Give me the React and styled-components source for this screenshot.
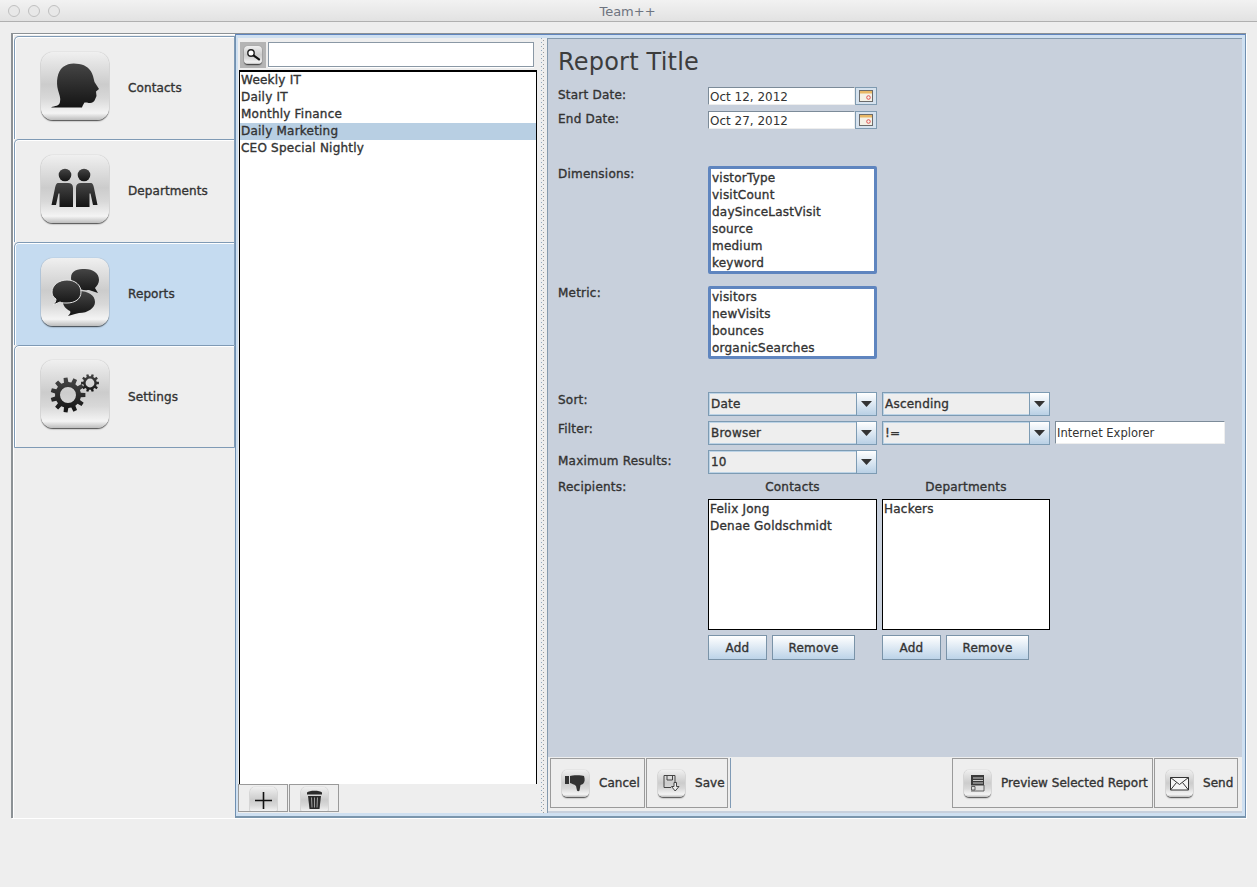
import React from "react";
import styled, { createGlobalStyle, css } from "styled-components";

const GlobalStyle = createGlobalStyle`
  html, body {
    margin: 0;
    padding: 0;
    background: #eeeeee;
  }
  body {
    font-family: "DejaVu Sans", "Liberation Sans", sans-serif;
    font-size: 12px;
    color: #333;
  }
`;

// the screenshot's font sits between regular and bold
const strong = css`
  -webkit-text-stroke: 0.35px #333;
  letter-spacing: ${(p) => p.$spacing ?? 0.22}px;
`;

// builds a cog outline with a round hole, used by the settings icon
const gearPath = (cx, cy, outer, root, hole, teeth) => {
  const step = (Math.PI * 2) / teeth;
  const pt = (r, a) => `${(cx + r * Math.cos(a)).toFixed(2)} ${(cy + r * Math.sin(a)).toFixed(2)}`;
  let d = "";
  for (let i = 0; i < teeth; i++) {
    const a = i * step;
    d += `${i === 0 ? "M" : "L"}${pt(root, a - step * 0.3)} L${pt(outer, a - step * 0.2)} L${pt(outer, a + step * 0.2)} L${pt(root, a + step * 0.3)} `;
  }
  d += `Z M${cx - hole} ${cy} a${hole} ${hole} 0 1 0 ${hole * 2} 0 a${hole} ${hole} 0 1 0 ${-hole * 2} 0 Z`;
  return d;
};

const Shared = () => (
  <svg width="0" height="0" style={{ position: "absolute" }}>
    <defs>
      <linearGradient id="glyph" x1="0" y1="0" x2="0" y2="1">
        <stop offset="0" stopColor="#454545" />
        <stop offset="1" stopColor="#141414" />
      </linearGradient>
    </defs>
  </svg>
);

const HeadIcon = () => (
  <svg viewBox="0 0 68 68">
    <path
      fill="url(#glyph)"
      d="M10 55.5C14 53.5 18 54.5 19 50C20 46 18 42 17 38C15 30 16 20 22 15C27 11 33 11 38 12C45 13 50 17 52 24L53.5 30L58 37L55 39.5L55.5 44L54 47.5C53 50.5 50 52 46 50.5L43.5 50.5C42.5 52 41.5 54 41 55.5Z"
    />
  </svg>
);

const PeopleIcon = () => (
  <svg viewBox="0 0 68 68">
    <g fill="url(#glyph)">
      <circle cx="24" cy="20" r="6.3" />
      <circle cx="43" cy="20" r="6.3" />
      <path d="M17 28H27Q32 28 32 33V52H18.5V38.5H17.5L15 50H10.5L14 33Q15 28 17 28Z" />
      <path d="M50 28H40Q35 28 35 33V52H48.5V38.5H49.5L52 50H56.5L53 33Q52 28 50 28Z" />
    </g>
  </svg>
);

const BubblesIcon = () => (
  <svg viewBox="0 0 68 68">
    <g fill="url(#glyph)">
      <path d="M30 20C30 12 37 11 44 11C52 11 58 15 58 22C58 25 56 28 54 30L57 35L48 32C38 33 30 28 30 20Z" />
      <path d="M22 44C22 37 30 33 38 33C47 33 54 37 54 44C54 50 47 55 38 55L34 56L27 58C29 56 30 54 29 53C25 51 22 48 22 44Z" />
      <path
        stroke="#e6e6e6"
        strokeWidth="1"
        d="M11 34C11 27 18 22 26 22C34 22 40 27 40 34C40 41 34 45 26 45C23 45 21 45 19 44L12 47C14 45 15 43 15 41C12 39 11 37 11 34Z"
      />
    </g>
  </svg>
);

const CogsIcon = () => (
  <svg viewBox="0 0 68 68">
    <g fill="url(#glyph)" fillRule="evenodd">
      <path d={gearPath(27, 35, 17.5, 13, 8, 11)} />
      <path d={gearPath(49, 23, 9, 6.8, 4.4, 10)} />
    </g>
  </svg>
);

const SearchIcon = () => (
  <svg viewBox="0 0 18 18">
    <circle cx="7" cy="7" r="3.2" fill="#fff" stroke="#222" strokeWidth="1.4" />
    <path d="M9.8 9.6L15 13.4" stroke="#111" strokeWidth="2.2" strokeLinecap="round" />
  </svg>
);

const PlusIcon = () => (
  <svg viewBox="0 0 27 27">
    <path d="M13.5 5V22M5 13.5H22" stroke="#111" strokeWidth="1.6" />
  </svg>
);

const TrashIcon = () => (
  <svg viewBox="0 0 27 27">
    <path fill="#2b2b2b" d="M6 5.5C8 3 19 3 21 5.5V7.5H6Z" />
    <path fill="#2b2b2b" d="M7 9H20L18.5 22H8.5Z" />
    <path d="M10.5 10.5L11 20.5M13.5 10.5V20.5M16.5 10.5L16 20.5" stroke="#aaa" strokeWidth="0.9" />
  </svg>
);

const ThumbIcon = () => (
  <svg viewBox="0 0 27 27">
    <path
      fill="#333"
      d="M3 6H7V14H3ZM8 6C10 5 20 5 22 6C23 9 23 12 21 14L18.5 15L17.5 20.5C17 21.5 15.5 21.5 15 20.5L14 16C12 14 10 14 8 13Z"
    />
  </svg>
);

const SaveIcon = () => (
  <svg viewBox="0 0 27 27">
    <path fill="none" stroke="#444" d="M6 5.5H17V12M13 17.5H6V5.5M9 5.5V10H14.5V5.5" />
    <path fill="#eee" stroke="#444" d="M16 12.5H18.5V16.5H21L17.2 21L13.5 16.5H16Z" />
  </svg>
);

const PreviewIcon = () => (
  <svg viewBox="0 0 27 27">
    <path fill="#3a3a3a" d="M7 5H20V21H7Z" />
    <path d="M9 8H19M9 10.5H19M9 13H19" stroke="#ddd" strokeWidth="0.9" />
    <path fill="#ddd" d="M7 15.5H20V21H7Z" />
    <path fill="none" stroke="#444" strokeWidth="0.8" d="M7.5 16.5H11V20H7.5ZM7 21H20V15" />
  </svg>
);

const MailIcon = () => (
  <svg viewBox="0 0 27 27">
    <path fill="#f5f5f5" stroke="#333" d="M4.5 7.5H22.5V20H4.5Z" />
    <path fill="none" stroke="#333" d="M4.5 7.5L13.5 14.5L22.5 7.5M4.5 20L10.5 12.5M22.5 20L16.5 12.5" />
  </svg>
);

const CalendarIcon = () => (
  <svg viewBox="0 0 16 14" width="16" height="14">
    <rect x="1.5" y="1.5" width="13" height="11" fill="#f4f1e6" stroke="#6b6b6b" />
    <rect x="2" y="2" width="12" height="2.5" fill="#e8b765" />
    <circle cx="10.5" cy="8.5" r="1.8" fill="none" stroke="#e05050" />
  </svg>
);

const ArrowIcon = () => (
  <svg viewBox="0 0 11 6" width="11" height="6">
    <path d="M0 0H11L5.5 6Z" fill="#333" />
  </svg>
);

const tabs = [
  { name: "Contacts", icon: <HeadIcon /> },
  { name: "Departments", icon: <PeopleIcon /> },
  { name: "Reports", icon: <BubblesIcon />, active: true },
  { name: "Settings", icon: <CogsIcon /> },
];

const reports = ["Weekly IT", "Daily IT", "Monthly Finance", "Daily Marketing", "CEO Special Nightly"];
const dimensions = ["vistorType", "visitCount", "daySinceLastVisit", "source", "medium", "keyword"];
const metrics = ["visitors", "newVisits", "bounces", "organicSearches"];

function Combo({ value, width }) {
  return (
    <ComboBox $width={width}>
      <ComboValue>{value}</ComboValue>
      <ComboArrow>
        <ArrowIcon />
      </ComboArrow>
    </ComboBox>
  );
}

function DateField({ value }) {
  return (
    <DateWrap>
      <DateInput>{value}</DateInput>
      <DateButton>
        <CalendarIcon />
      </DateButton>
    </DateWrap>
  );
}

function Recipient({ title, people }) {
  return (
    <RecipientColumn>
      <RecipientTitle>{title}</RecipientTitle>
      <RecipientList>
        {people.map((p) => (
          <RecipientItem key={p}>{p}</RecipientItem>
        ))}
      </RecipientList>
      <ButtonRow>
        <SmallButton $width={59}>Add</SmallButton>
        <SmallButton $width={83}>Remove</SmallButton>
      </ButtonRow>
    </RecipientColumn>
  );
}

function FooterAction({ icon, label, width }) {
  return (
    <FooterButton $width={width} $spacing={0.03}>
      <Tile $size={27} $radius={5}>
        {icon}
      </Tile>
      <span>{label}</span>
    </FooterButton>
  );
}

export default function App() {
  return (
    <Page>
      <GlobalStyle />
      <Shared />
      <TitleBar>
        <Lights>
          <Light />
          <Light />
          <Light />
        </Lights>
        Team++
      </TitleBar>
      <Frame>
        <Sidebar>
          {tabs.map((t) => (
            <Tab key={t.name} $active={t.active}>
              <TabTile $size={68} $radius={12}>
                {t.icon}
              </TabTile>
              <TabLabel $spacing={0.1}>{t.name}</TabLabel>
            </Tab>
          ))}
        </Sidebar>
        <Main>
          <ListPane>
            <SearchBar>
              <SearchButton>
                <Tile $size={18} $radius={4}>
                  <SearchIcon />
                </Tile>
              </SearchButton>
              <SearchInput />
            </SearchBar>
            <ReportList>
              {reports.map((r) => (
                <ReportItem key={r} $selected={r === "Daily Marketing"}>
                  {r}
                </ReportItem>
              ))}
            </ReportList>
            <ListToolbar>
              <ToolButton>
                <Tile $size={27} $radius={5}>
                  <PlusIcon />
                </Tile>
              </ToolButton>
              <ToolButton>
                <Tile $size={27} $radius={5}>
                  <TrashIcon />
                </Tile>
              </ToolButton>
            </ListToolbar>
          </ListPane>
          <Splitter />
          <Panel>
            <FormArea>
              <Title>Report Title</Title>
              <Row $top={8}>
                <Label>Start Date:</Label>
                <DateField value="Oct 12, 2012" />
              </Row>
              <Row $top={6}>
                <Label>End Date:</Label>
                <DateField value="Oct 27, 2012" />
              </Row>
              <Row $top={37}>
                <Label>Dimensions:</Label>
                <PickList $height={108} $pad={1}>
                  {dimensions.map((d) => (
                    <PickItem key={d}>{d}</PickItem>
                  ))}
                </PickList>
              </Row>
              <Row $top={12}>
                <Label $offset={0}>Metric:</Label>
                <PickList $height={73} $pad={0}>
                  {metrics.map((m) => (
                    <PickItem key={m}>{m}</PickItem>
                  ))}
                </PickList>
              </Row>
              <Row $top={33}>
                <Label>Sort:</Label>
                <Fields>
                  <Combo value="Date" width={169} />
                  <Combo value="Ascending" width={168} />
                </Fields>
              </Row>
              <Row $top={5}>
                <Label>Filter:</Label>
                <Fields>
                  <Combo value="Browser" width={169} />
                  <Combo value="!=" width={168} />
                  <FilterInput>Internet Explorer</FilterInput>
                </Fields>
              </Row>
              <Row $top={5}>
                <Label $offset={4}>Maximum Results:</Label>
                <Fields>
                  <Combo value="10" width={169} />
                </Fields>
              </Row>
              <Row $top={5}>
                <Label>Recipients:</Label>
                <Fields>
                  <Recipient title="Contacts" people={["Felix Jong", "Denae Goldschmidt"]} />
                  <Recipient title="Departments" people={["Hackers"]} />
                </Fields>
              </Row>
            </FormArea>
            <Footer>
              <FooterAction icon={<ThumbIcon />} label="Cancel" width={95} />
              <FooterAction icon={<SaveIcon />} label="Save" width={82} />
              <FooterGap />
              <FooterAction icon={<PreviewIcon />} label="Preview Selected Report" width={201} />
              <FooterAction icon={<MailIcon />} label="Send" width={84} />
            </Footer>
          </Panel>
        </Main>
      </Frame>
    </Page>
  );
}

const Page = styled.div`
  width: 1257px;
  height: 887px;
  overflow: hidden;
  background: #eeeeee;
`;

const TitleBar = styled.div`
  height: 22px;
  box-sizing: border-box;
  padding: 1px 2px 0 0;
  display: flex;
  align-items: center;
  justify-content: center;
  position: relative;
  font-size: 13px;
  color: #6e7480;
  background: linear-gradient(180deg, #f2f2f2, #e2e2e2);
  border-bottom: 1px solid #b0b0b0;
`;

const Lights = styled.div`
  position: absolute;
  left: 8px;
  top: 5px;
  display: flex;
  gap: 8px;
`;

const Light = styled.span`
  width: 10px;
  height: 10px;
  border-radius: 50%;
  border: 1px solid #c0c0c0;
  background: #e8e8e8;
`;

const Frame = styled.div`
  display: flex;
  height: 785px;
  width: 1235px;
  margin: 11px 0 0 11px;
  box-sizing: border-box;
  border-top: 1px solid #8c9195;
  border-left: 2px solid #8c9195;
  box-shadow: 1px 1px 0 #fff;
`;

const Sidebar = styled.div`
  width: 222px;
  flex: none;
  box-sizing: border-box;
  padding-top: 1px;
  border-top: 1px solid #fff;
  border-left: 1px solid #fff;
`;

const Tab = styled.div`
  height: 103px;
  box-sizing: border-box;
  display: flex;
  align-items: center;
  gap: 19px;
  padding: 0 0 3px 26px;
  border: 1px solid #7f9ab5;
  border-width: 1px 1px 0 1px;
  border-top-left-radius: 5px;
  box-shadow: inset 0 1px 0 #fff, inset 1px 0 0 #fff;
  background: ${(p) => (p.$active ? "#c5dbf0" : "#eeeeee")};
  &:last-child {
    border-bottom-width: 1px;
  }
`;

const TabLabel = styled.span`
  ${strong}
  margin-top: 3px;
`;

const Tile = styled.span`
  flex: none;
  display: block;
  width: ${(p) => p.$size}px;
  height: ${(p) => p.$size}px;
  border-radius: ${(p) => p.$radius}px;
  background: linear-gradient(180deg, #f0f0f0 0%, #e2e2e2 18%, #cccccc 48%, #d8d8d8 68%, #f4f4f4 90%, #bdbdbd 100%);
  box-shadow: 0 1px 1px rgba(0, 0, 0, 0.5), 0 2px 2px -1px rgba(0, 0, 0, 0.3), 0 0 1px rgba(0, 0, 0, 0.35);
  svg {
    display: block;
    width: 100%;
    height: 100%;
  }
`;

const TabTile = styled(Tile)`
  margin-top: -2px;
`;

const Main = styled.div`
  flex: 1;
  min-width: 0;
  display: flex;
  box-sizing: border-box;
  padding: 3px 3px 3px 2px;
  background: #cfe0f1;
  border: 1px solid #6f8fb0;
  border-top: 1px solid #5f85bf;
  border-bottom: 2px solid #7b96ad;
`;

const ListPane = styled.div`
  width: 299px;
  flex: none;
  display: flex;
  flex-direction: column;
  background: #eeeeee;
`;

const SearchBar = styled.div`
  height: 32px;
  flex: none;
  box-sizing: border-box;
  padding: 4px 3px 2px 2px;
  display: flex;
  gap: 2px;
`;

const SearchButton = styled.div`
  width: 26px;
  height: 26px;
  display: flex;
  align-items: center;
  justify-content: center;
  background: #b4b4b4;
`;

const SearchInput = styled.div`
  flex: 1;
  height: 23px;
  background: #fff;
  border: 1px solid #8a98a5;
  box-shadow: 0 1px 0 #fff;
`;

const ReportList = styled.div`
  flex: 1;
  min-height: 0;
  margin-left: 1px;
  background: #fff;
  border: 1px solid #000;
  border-top-width: 2px;
  border-bottom: none;
`;

const ReportItem = styled.div`
  height: 17px;
  line-height: 17px;
  padding-left: 1px;
  ${strong}
  background: ${(p) => (p.$selected ? "#b8cfe3" : "transparent")};
`;

const ListToolbar = styled.div`
  height: 29px;
  flex: none;
  display: flex;
  gap: 1px;
`;

const ToolButton = styled.div`
  width: 50px;
  height: 28px;
  box-sizing: border-box;
  display: flex;
  justify-content: center;
  padding-top: 2px;
  overflow: hidden;
  border: 1px solid #9a9a9a;
`;

const Splitter = styled.div`
  width: 10px;
  flex: none;
  background-color: #eeeeee;
  background-image: repeating-linear-gradient(180deg, #8ea6bd 0 1px, transparent 1px 4px),
    repeating-linear-gradient(180deg, transparent 0 2px, #9b9b9b 2px 3px, transparent 3px 4px);
  background-size: 1px 100%;
  background-position: 4px 0, 6px 0;
  background-repeat: no-repeat;
`;

const Panel = styled.div`
  flex: 1;
  min-width: 0;
  display: flex;
  flex-direction: column;
  background: #c8d0dc;
  border-left: 1px solid #8499ad;
  border-top: 1px solid #8499ad;
`;

const FormArea = styled.div`
  flex: 1;
  min-height: 0;
  box-sizing: border-box;
  padding: 6px 0 0 10px;
`;

const Title = styled.div`
  height: 34px;
  line-height: 34px;
  font-size: 24px;
  letter-spacing: 0.2px;
  color: #3c3c3c;
`;

const Row = styled.div`
  display: grid;
  grid-template-columns: 150px 1fr;
  margin-top: ${(p) => p.$top}px;
`;

const Label = styled.div`
  line-height: 14px;
  padding-top: ${(p) => p.$offset ?? 1}px;
  ${strong}
`;

const Fields = styled.div`
  display: flex;
  gap: 5px;
`;

const DateWrap = styled.div`
  display: flex;
  height: 18px;
`;

const DateInput = styled.div`
  width: 147px;
  box-sizing: border-box;
  line-height: 18px;
  padding-left: 1px;
  background: #fff;
  border: 1px solid #7c8b99;
  border-right-color: #eee;
  border-bottom-color: #eee;
`;

const DateButton = styled.div`
  width: 22px;
  box-sizing: border-box;
  display: flex;
  align-items: center;
  justify-content: center;
  background: #d6e2ee;
  border: 1px solid #7f9ab0;
`;

const PickList = styled.div`
  width: 169px;
  height: ${(p) => p.$height}px;
  box-sizing: border-box;
  padding-top: ${(p) => p.$pad}px;
  background: #fff;
  border: 3px solid #5f85bf;
  border-radius: 2px;
`;

const PickItem = styled.div`
  height: 17px;
  line-height: 17px;
  padding-left: 1px;
  ${strong}
`;

const ComboBox = styled.div`
  width: ${(p) => p.$width}px;
  height: 24px;
  box-sizing: border-box;
  display: flex;
  background: #eeeeee;
  border: 1px solid #7d9bb3;
  box-shadow: inset 0 0 0 1px #bcd3e6;
`;

const ComboValue = styled.div`
  flex: 1;
  line-height: 22px;
  padding-left: 2px;
  ${strong}
`;

const ComboArrow = styled.div`
  width: 19px;
  flex: none;
  display: flex;
  align-items: center;
  justify-content: center;
  border-left: 1px solid #7d9bb3;
  background: linear-gradient(180deg, #ffffff, #b9d0e5);
`;

const FilterInput = styled.div`
  width: 170px;
  height: 23px;
  box-sizing: border-box;
  font-size: 11.5px;
  line-height: 23px;
  padding-left: 1px;
  background: #fff;
  border: 1px solid #7c8b99;
  border-right-color: #eee;
  border-bottom-color: #eee;
`;

const RecipientColumn = styled.div`
  width: 169px;
  &:nth-child(2) {
    width: 168px;
  }
`;

const RecipientTitle = styled.div`
  height: 20px;
  box-sizing: border-box;
  padding-top: 1px;
  line-height: 14px;
  text-align: center;
  ${strong}
`;

const RecipientList = styled.div`
  height: 131px;
  box-sizing: border-box;
  padding-top: 1px;
  background: #fff;
  border: 1px solid #000;
`;

const RecipientItem = styled.div`
  height: 17px;
  line-height: 17px;
  padding-left: 1px;
  ${strong}
`;

const ButtonRow = styled.div`
  display: flex;
  gap: 5px;
  margin-top: 5px;
`;

const SmallButton = styled.div`
  width: ${(p) => p.$width}px;
  height: 25px;
  box-sizing: border-box;
  line-height: 24px;
  text-align: center;
  ${strong}
  background: linear-gradient(180deg, #ffffff, #bcd3e8);
  border: 1px solid #7a93a8;
`;

const Footer = styled.div`
  height: 56px;
  flex: none;
  box-sizing: border-box;
  padding: 1px 4px 3px 2px;
  display: flex;
  gap: 1px;
  background: #eeeeee;
  border-bottom: 2px solid #c8d0dc;
`;

const FooterGap = styled.div`
  flex: 1;
  margin-left: 1px;
  border-left: 1px solid #7f9ab5;
`;

const FooterButton = styled.div`
  width: ${(p) => p.$width}px;
  flex: none;
  box-sizing: border-box;
  display: flex;
  align-items: center;
  gap: 10px;
  padding-left: 11px;
  white-space: nowrap;
  ${strong}
  border: 1px solid #9a9a9a;
`;
